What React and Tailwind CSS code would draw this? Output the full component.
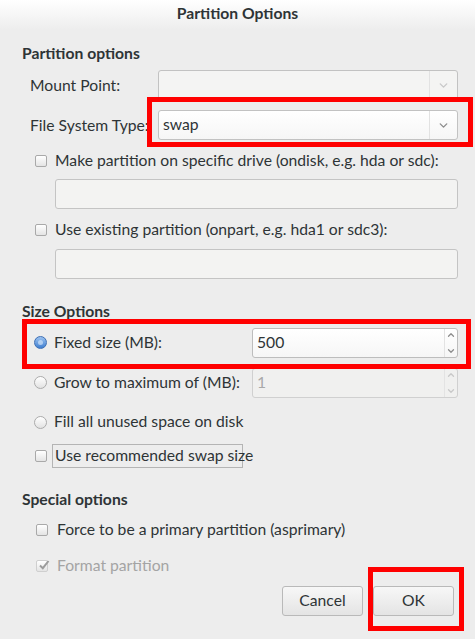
import { ChevronDown, ChevronUp } from "lucide-react";

const font = { fontFamily: "Lato, 'Liberation Sans', sans-serif" };

function Check({ checked, disabled }) {
  return (
    <span
      className={`relative inline-flex h-[12px] w-[12px] shrink-0 items-center justify-center rounded-[2px] border bg-gradient-to-b from-white to-[#e4e4e4] ${
        disabled ? "border-[#cfcfcf]" : "border-[#a9a9a9]"
      }`}
    >
      {checked ? (
        <svg width="12" height="12" viewBox="0 0 12 12" className="absolute -top-[2px] left-[1px]">
          <path d="M2 6.5 L4.8 9.2 L10.5 2" fill="none" stroke="#9c9c9c" strokeWidth="2" />
        </svg>
      ) : null}
    </span>
  );
}

function Radio({ checked }) {
  return checked ? (
    <span className="inline-flex h-[13px] w-[13px] shrink-0 items-center justify-center rounded-full border border-[#3d6fb4] bg-gradient-to-b from-[#9cc3f0] to-[#3f7fd0]">
      <span className="h-[5px] w-[5px] rounded-full bg-[#cfe2f8] opacity-70" />
    </span>
  ) : (
    <span className="inline-block h-[13px] w-[13px] shrink-0 rounded-full border border-[#ababab] bg-gradient-to-b from-white to-[#e2e2e2]" />
  );
}

function Combo({ value, disabled }) {
  return (
    <div
      className={`flex h-[30px] w-[300px] shrink-0 rounded-[3px] border border-[#c2c2c2] ${
        disabled ? "bg-[#f4f4f3]" : "bg-gradient-to-b from-white to-[#f6f6f6]"
      }`}
    >
      <div className="flex flex-1 items-center pl-[4px] text-[#2e3436]">{value}</div>
      <div className="flex w-[28px] items-center justify-center border-l border-[#e2e2e2]">
        <ChevronDown size={13} strokeWidth={2.5} color={disabled ? "#c8c8c8" : "#8d8d8d"} />
      </div>
    </div>
  );
}

function Spin({ value, disabled }) {
  return (
    <div
      className={`flex h-[30px] w-[206px] shrink-0 rounded-[3px] border ${
        disabled ? "border-[#d0d0d0] bg-[#f0f0ef]" : "border-[#bdbdbd] bg-gradient-to-b from-white to-[#f6f6f6]"
      }`}
    >
      <div className={`flex flex-1 items-center pl-[4px] ${disabled ? "text-[#a8a8a8]" : "text-[#2e3436]"}`}>
        {value}
      </div>
      <div className="flex w-[13px] flex-col items-center justify-between border-l border-[#e3e3e3] py-[1px]">
        <ChevronUp size={10} strokeWidth={3} color={disabled ? "#c8c8c8" : "#8d8d8d"} />
        <ChevronDown size={10} strokeWidth={3} color={disabled ? "#c8c8c8" : "#8d8d8d"} />
      </div>
    </div>
  );
}

function Entry() {
  return <div className="ml-[55px] h-[30px] w-[403px] rounded-[3px] border border-[#c4c4c4] bg-[#f3f3f2]" />;
}

function Heading({ children, className }) {
  return <div className={`pl-[22px] font-bold leading-[20px] text-[#2e3436] ${className}`}>{children}</div>;
}

function RedBox({ className }) {
  return <div className={`pointer-events-none absolute border-[5px] border-[#ff0000] ${className}`} />;
}

export default function App() {
  return (
    <div
      style={font}
      className="relative h-[639px] w-[475px] overflow-hidden whitespace-nowrap bg-[#ededed] text-[15.7px] text-[#2e3436]"
    >
      <div className="h-[30px] bg-gradient-to-b from-white to-[#ededed] pt-[3px] text-center font-bold leading-[20px]">
        Partition Options
      </div>

      <Heading className="mt-[13px]">Partition options</Heading>

      <div className="mt-[7px] flex h-[30px] items-center">
        <span className="w-[158px] shrink-0 pl-[30px] leading-[20px]">Mount Point:</span>
        <Combo value="" disabled />
      </div>
      <div className="mt-[10px] flex h-[30px] items-center">
        <span className="w-[158px] shrink-0 pl-[30px] leading-[20px]">File System Type:</span>
        <Combo value="swap" />
      </div>

      <div className="mt-[11px] flex h-[20px] items-center gap-[8px] pl-[35px]">
        <Check />
        <span>Make partition on specific drive (ondisk, e.g. hda or sdc):</span>
      </div>
      <div className="mt-[8px]">
        <Entry />
      </div>

      <div className="mt-[11px] flex h-[20px] items-center gap-[8px] pl-[35px]">
        <Check />
        <span>Use existing partition (onpart, e.g. hda1 or sdc3):</span>
      </div>
      <div className="mt-[9px]">
        <Entry />
      </div>

      <Heading className="mt-[22px]">Size Options</Heading>

      <div className="mt-[7px] flex h-[30px] items-center">
        <div className="flex w-[252px] shrink-0 items-center gap-[7px] pl-[34px]">
          <Radio checked />
          <span>Fixed size (MB):</span>
        </div>
        <Spin value="500" />
      </div>
      <div className="mt-[10px] flex h-[30px] items-center">
        <div className="flex w-[252px] shrink-0 items-center gap-[7px] pl-[34px]">
          <Radio />
          <span>Grow to maximum of (MB):</span>
        </div>
        <Spin value="1" disabled />
      </div>

      <div className="mt-[14px] flex h-[20px] items-center gap-[7px] pl-[34px]">
        <Radio />
        <span>Fill all unused space on disk</span>
      </div>

      <div className="mt-[12px] flex h-[24px] items-center gap-[5px] pl-[35px]">
        <Check />
        <span className="flex h-[24px] w-[191px] items-center border border-[#b4b4b4] pl-[2px]">
          Use recommended swap size
        </span>
      </div>

      <Heading className="mt-[21px]">Special options</Heading>

      <div className="mt-[11px] flex h-[20px] items-center gap-[9px] pl-[36px]">
        <Check />
        <span>Force to be a primary partition (asprimary)</span>
      </div>
      <div className="mt-[16px] flex h-[20px] items-center gap-[9px] pl-[36px] text-[#a4a4a4]">
        <Check checked disabled />
        <span>Format partition</span>
      </div>

      <div className="mt-[10px] flex justify-end gap-[10px] pr-[21px]">
        <button className="h-[30px] w-[81px] rounded-[3px] border border-[#b9b9b9] bg-gradient-to-b from-[#f7f7f7] to-[#e4e4e4] text-[#2e3436]">
          Cancel
        </button>
        <button className="h-[30px] w-[81px] rounded-[3px] border border-[#b9b9b9] bg-gradient-to-b from-[#f7f7f7] to-[#e4e4e4] text-[#2e3436]">
          OK
        </button>
      </div>

      <RedBox className="left-[147px] top-[97px] h-[50px] w-[326px]" />
      <RedBox className="left-[22px] top-[319px] h-[50px] w-[449px]" />
      <RedBox className="left-[368px] top-[567px] h-[64px] w-[96px]" />
    </div>
  );
}
